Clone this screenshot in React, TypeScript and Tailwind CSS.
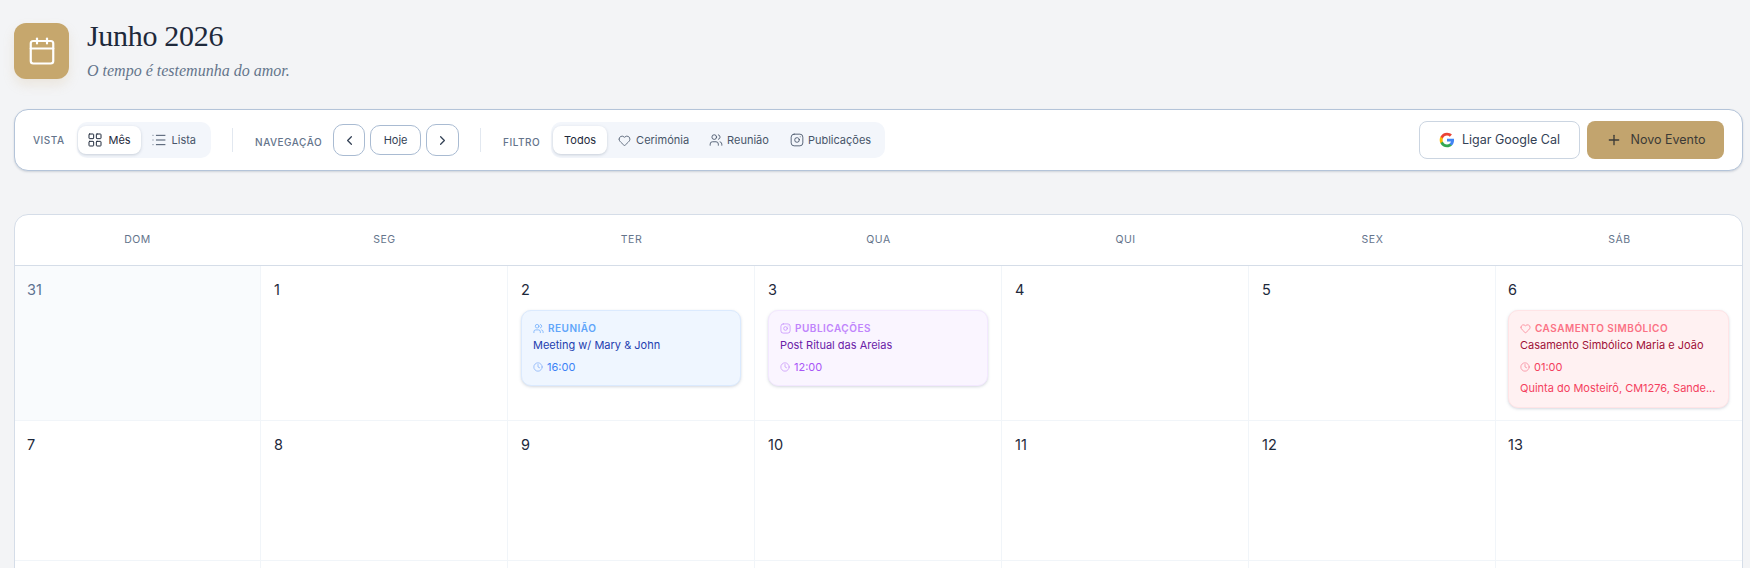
import React from "react";
import {
  Calendar,
  ChevronLeft,
  ChevronRight,
  Clock,
  Heart,
  Instagram,
  LayoutGrid,
  List,
  Plus,
  Users,
} from "lucide-react";

const weekDays = ["DOM", "SEG", "TER", "QUA", "QUI", "SEX", "SÁB"];

function GoogleIcon() {
  return (
    <svg width="16" height="16" viewBox="0 0 24 24">
      <path fill="#4285F4" d="M22.56 12.25c0-.78-.07-1.53-.2-2.25H12v4.26h5.92c-.26 1.37-1.04 2.53-2.21 3.31v2.77h3.57c2.08-1.92 3.28-4.74 3.28-8.09z" />
      <path fill="#34A853" d="M12 23c2.97 0 5.46-.98 7.28-2.66l-3.57-2.77c-.98.66-2.23 1.06-3.71 1.06-2.86 0-5.29-1.93-6.16-4.53H2.18v2.84C3.99 20.53 7.7 23 12 23z" />
      <path fill="#FBBC05" d="M5.84 14.09c-.22-.66-.35-1.36-.35-2.09s.13-1.43.35-2.09V7.07H2.18C1.43 8.55 1 10.22 1 12s.43 3.45 1.18 4.93l2.85-2.22.81-.62z" />
      <path fill="#EA4335" d="M12 5.38c1.62 0 3.06.56 4.21 1.64l3.15-3.15C17.45 2.09 14.97 1 12 1 7.7 1 3.99 3.47 2.18 7.07l3.66 2.84c.87-2.6 3.3-4.53 6.16-4.53z" />
    </svg>
  );
}

function ToolbarLabel({ children }: { children: React.ReactNode }) {
  return (
    <span className="mt-[1px] text-[10px] font-medium tracking-[0.05em] text-[#64748b]">
      {children}
    </span>
  );
}

function EventCard({
  icon,
  label,
  title,
  time,
  place,
  box,
  labelColor,
  titleColor,
  timeColor,
}: {
  icon: React.ReactNode;
  label: string;
  title: string;
  time: string;
  place?: string;
  box: string;
  labelColor: string;
  titleColor: string;
  timeColor: string;
}) {
  return (
    <div className={`mt-[10px] rounded-[10px] border px-[11px] pt-[10px] shadow-[0_1px_3px_rgba(100,116,139,0.28)] ${box} ${place ? "h-[98px]" : "h-[76px]"}`}>
      <div className={`flex items-center gap-[4px] text-[10px] font-semibold leading-[14px] tracking-[0.05em] ${labelColor}`}>
        {icon}
        {label}
      </div>
      <div className={`mt-[2px] text-[11px] font-normal leading-[16px] ${titleColor}`}>{title}</div>
      <div className={`mt-[6px] flex items-center gap-[4px] text-[11px] leading-[16px] ${timeColor}`}>
        <Clock size={10} strokeWidth={1.5} className="opacity-70" />
        {time}
      </div>
      {place && (
        <div className={`mt-[5px] truncate text-[11px] leading-[16px] ${timeColor}`}>{place}</div>
      )}
    </div>
  );
}

function DayCell({
  day,
  muted,
  last,
  children,
}: {
  day?: number;
  muted?: boolean;
  last?: boolean;
  children?: React.ReactNode;
}) {
  return (
    <div className={`min-w-0 pt-[14px] ${last ? "pl-[12px] pr-[14px]" : "border-r border-[#f1f5f9] px-[13px]"} ${muted ? "bg-[#f9fbfd]" : "bg-white"}`}>
      {day !== undefined && (
        <div className={`text-[14.5px] leading-[20px] ${muted ? "text-[#5d7291]" : "text-[#1e293b]"}`}>{day}</div>
      )}
      {children}
    </div>
  );
}

export default function App() {
  return (
    <div className="h-screen overflow-hidden bg-[#f3f4f6] px-[14px] pt-[23px] font-['Inter',sans-serif]">
      <header className="flex h-[56px] items-start gap-[18px]">
        <div className="flex h-[56px] w-[55px] items-center justify-center rounded-[12px] bg-[#c6a76d] text-white shadow-[0_6px_12px_rgba(198,167,109,0.18)]">
          <Calendar size={30} strokeWidth={1.75} />
        </div>
        <div className="-mt-[5px]">
          <h1 className="font-['Liberation_Serif',serif] text-[30px] leading-[36px] tracking-[-0.01em] text-[#1e293b]">
            Junho 2026
          </h1>
          <p className="mt-[6px] font-['Liberation_Serif',serif] text-[16px] italic leading-[22px] text-[#64748b]">
            O tempo é testemunha do amor.
          </p>
        </div>
      </header>

      <div className="mt-[30px] flex h-[62px] w-[1729px] items-center justify-between rounded-[14px] border border-[#b4c4d9] bg-white px-[18px] shadow-[0_1px_2px_rgba(100,116,139,0.25)]">
        <div className="flex items-center">
          <ToolbarLabel>VISTA</ToolbarLabel>
          <div className="ml-[12px] flex h-[36px] items-center rounded-[10px] bg-[#f3f6fb] pl-[1px] pr-[15px] text-[11px]">
            <div className="flex h-[28px] w-[63px] items-center justify-center gap-[5px] rounded-[8px] bg-white text-[#1e293b] shadow-[0_1px_3px_rgba(100,116,139,0.3)]">
              <LayoutGrid size={16} strokeWidth={1.5} />
              Mês
            </div>
            <div className="ml-[10px] flex items-center gap-[5px] text-[#475569]">
              <List size={16} strokeWidth={1.5} />
              Lista
            </div>
          </div>

          <div className="ml-[21px] h-[24px] w-px bg-[#e2e8f0]" />

          <div className="ml-[22px]">
            <ToolbarLabel>NAVEGAÇÃO</ToolbarLabel>
          </div>
          <div className="ml-[11px] flex items-center gap-[5px] text-[#334155]">
            <button className="flex h-[32px] w-[32px] items-center justify-center rounded-[10px] border border-[#a9bbd2]">
              <ChevronLeft size={15} strokeWidth={2} />
            </button>
            <button className="flex h-[30px] w-[51px] items-center justify-center rounded-[10px] border border-[#a9bbd2] text-[11px]">
              Hoje
            </button>
            <button className="flex h-[32px] w-[33px] items-center justify-center rounded-[10px] border border-[#a9bbd2]">
              <ChevronRight size={15} strokeWidth={2} />
            </button>
          </div>

          <div className="ml-[21px] h-[24px] w-px bg-[#e2e8f0]" />

          <div className="ml-[22px]">
            <ToolbarLabel>FILTRO</ToolbarLabel>
          </div>
          <div className="ml-[11px] flex h-[36px] items-center rounded-[10px] bg-[#f3f6fb] pl-[2px] pr-[14px] text-[11px] text-[#475569]">
            <div className="flex h-[28px] w-[54px] items-center justify-center rounded-[8px] bg-white text-[#1e293b] shadow-[0_1px_3px_rgba(100,116,139,0.3)]">
              Todos
            </div>
            <div className="ml-[11px] flex items-center gap-[5px]">
              <Heart size={13} strokeWidth={1.5} />
              Cerimónia
            </div>
            <div className="ml-[20px] flex items-center gap-[4px]">
              <Users size={14} strokeWidth={1.5} />
              Reunião
            </div>
            <div className="ml-[21px] flex items-center gap-[4px]">
              <Instagram size={14} strokeWidth={1.5} />
              Publicações
            </div>
          </div>
        </div>

        <div className="flex items-center gap-[7px]">
          <button className="flex h-[38px] w-[161px] items-center justify-center gap-[7px] rounded-[8px] border border-[#cbd5e1] bg-white text-[12.5px] text-[#334155]">
            <GoogleIcon />
            Ligar Google Cal
          </button>
          <button className="flex h-[38px] w-[137px] items-center justify-center gap-[9px] rounded-[8px] bg-[#c2a46e] text-[12.5px] text-[#3b3a36]">
            <Plus size={16} strokeWidth={2} />
            Novo Evento
          </button>
        </div>
      </div>

      <div className="mt-[43px] w-[1729px] overflow-hidden rounded-t-[14px] border border-[#d5dde8] bg-white">
        <div className="-mx-px grid h-[51px] grid-cols-7 border-b border-[#d5dde8]">
          {weekDays.map((d) => (
            <div key={d} className="flex items-center justify-center text-[10.5px] tracking-[0.05em] text-[#64748b]">
              {d}
            </div>
          ))}
        </div>

        <div className="-mx-px grid h-[155px] grid-cols-7 border-b border-[#f1f5f9]">
          <DayCell day={31} muted />
          <DayCell day={1} />
          <DayCell day={2}>
            <EventCard
              icon={<Users size={11} strokeWidth={1.5} />}
              label="REUNIÃO"
              title="Meeting w/ Mary & John"
              time="16:00"
              box="border-[#dbeafe] bg-[#eff6ff]"
              labelColor="text-[#60a5fa]"
              titleColor="text-[#1e40af]"
              timeColor="text-[#3b82f6]"
            />
          </DayCell>
          <DayCell day={3}>
            <EventCard
              icon={<Instagram size={11} strokeWidth={1.5} />}
              label="PUBLICAÇÕES"
              title="Post Ritual das Areias"
              time="12:00"
              box="border-[#f3e8ff] bg-[#faf5ff]"
              labelColor="text-[#c084fc]"
              titleColor="text-[#6b21a8]"
              timeColor="text-[#a855f7]"
            />
          </DayCell>
          <DayCell day={4} />
          <DayCell day={5} />
          <DayCell day={6} last>
            <EventCard
              icon={<Heart size={11} strokeWidth={1.5} />}
              label="CASAMENTO SIMBÓLICO"
              title="Casamento Simbólico Maria e João"
              time="01:00"
              place="Quinta do Mosteirô, CM1276, Sande..."
              box="border-[#ffe4e6] bg-[#fff1f2]"
              labelColor="text-[#fb7185]"
              titleColor="text-[#9f1239]"
              timeColor="text-[#f43f5e]"
            />
          </DayCell>
        </div>

        <div className="-mx-px grid h-[140px] grid-cols-7 border-b border-[#f1f5f9]">
          {[7, 8, 9, 10, 11, 12, 13].map((d) => (
            <DayCell key={d} day={d} last={d === 13} />
          ))}
        </div>

        <div className="-mx-px grid h-[60px] grid-cols-7">
          {[14, 15, 16, 17, 18, 19, 20].map((d) => (
            <DayCell key={d} last={d === 20} />
          ))}
        </div>
      </div>
    </div>
  );
}
